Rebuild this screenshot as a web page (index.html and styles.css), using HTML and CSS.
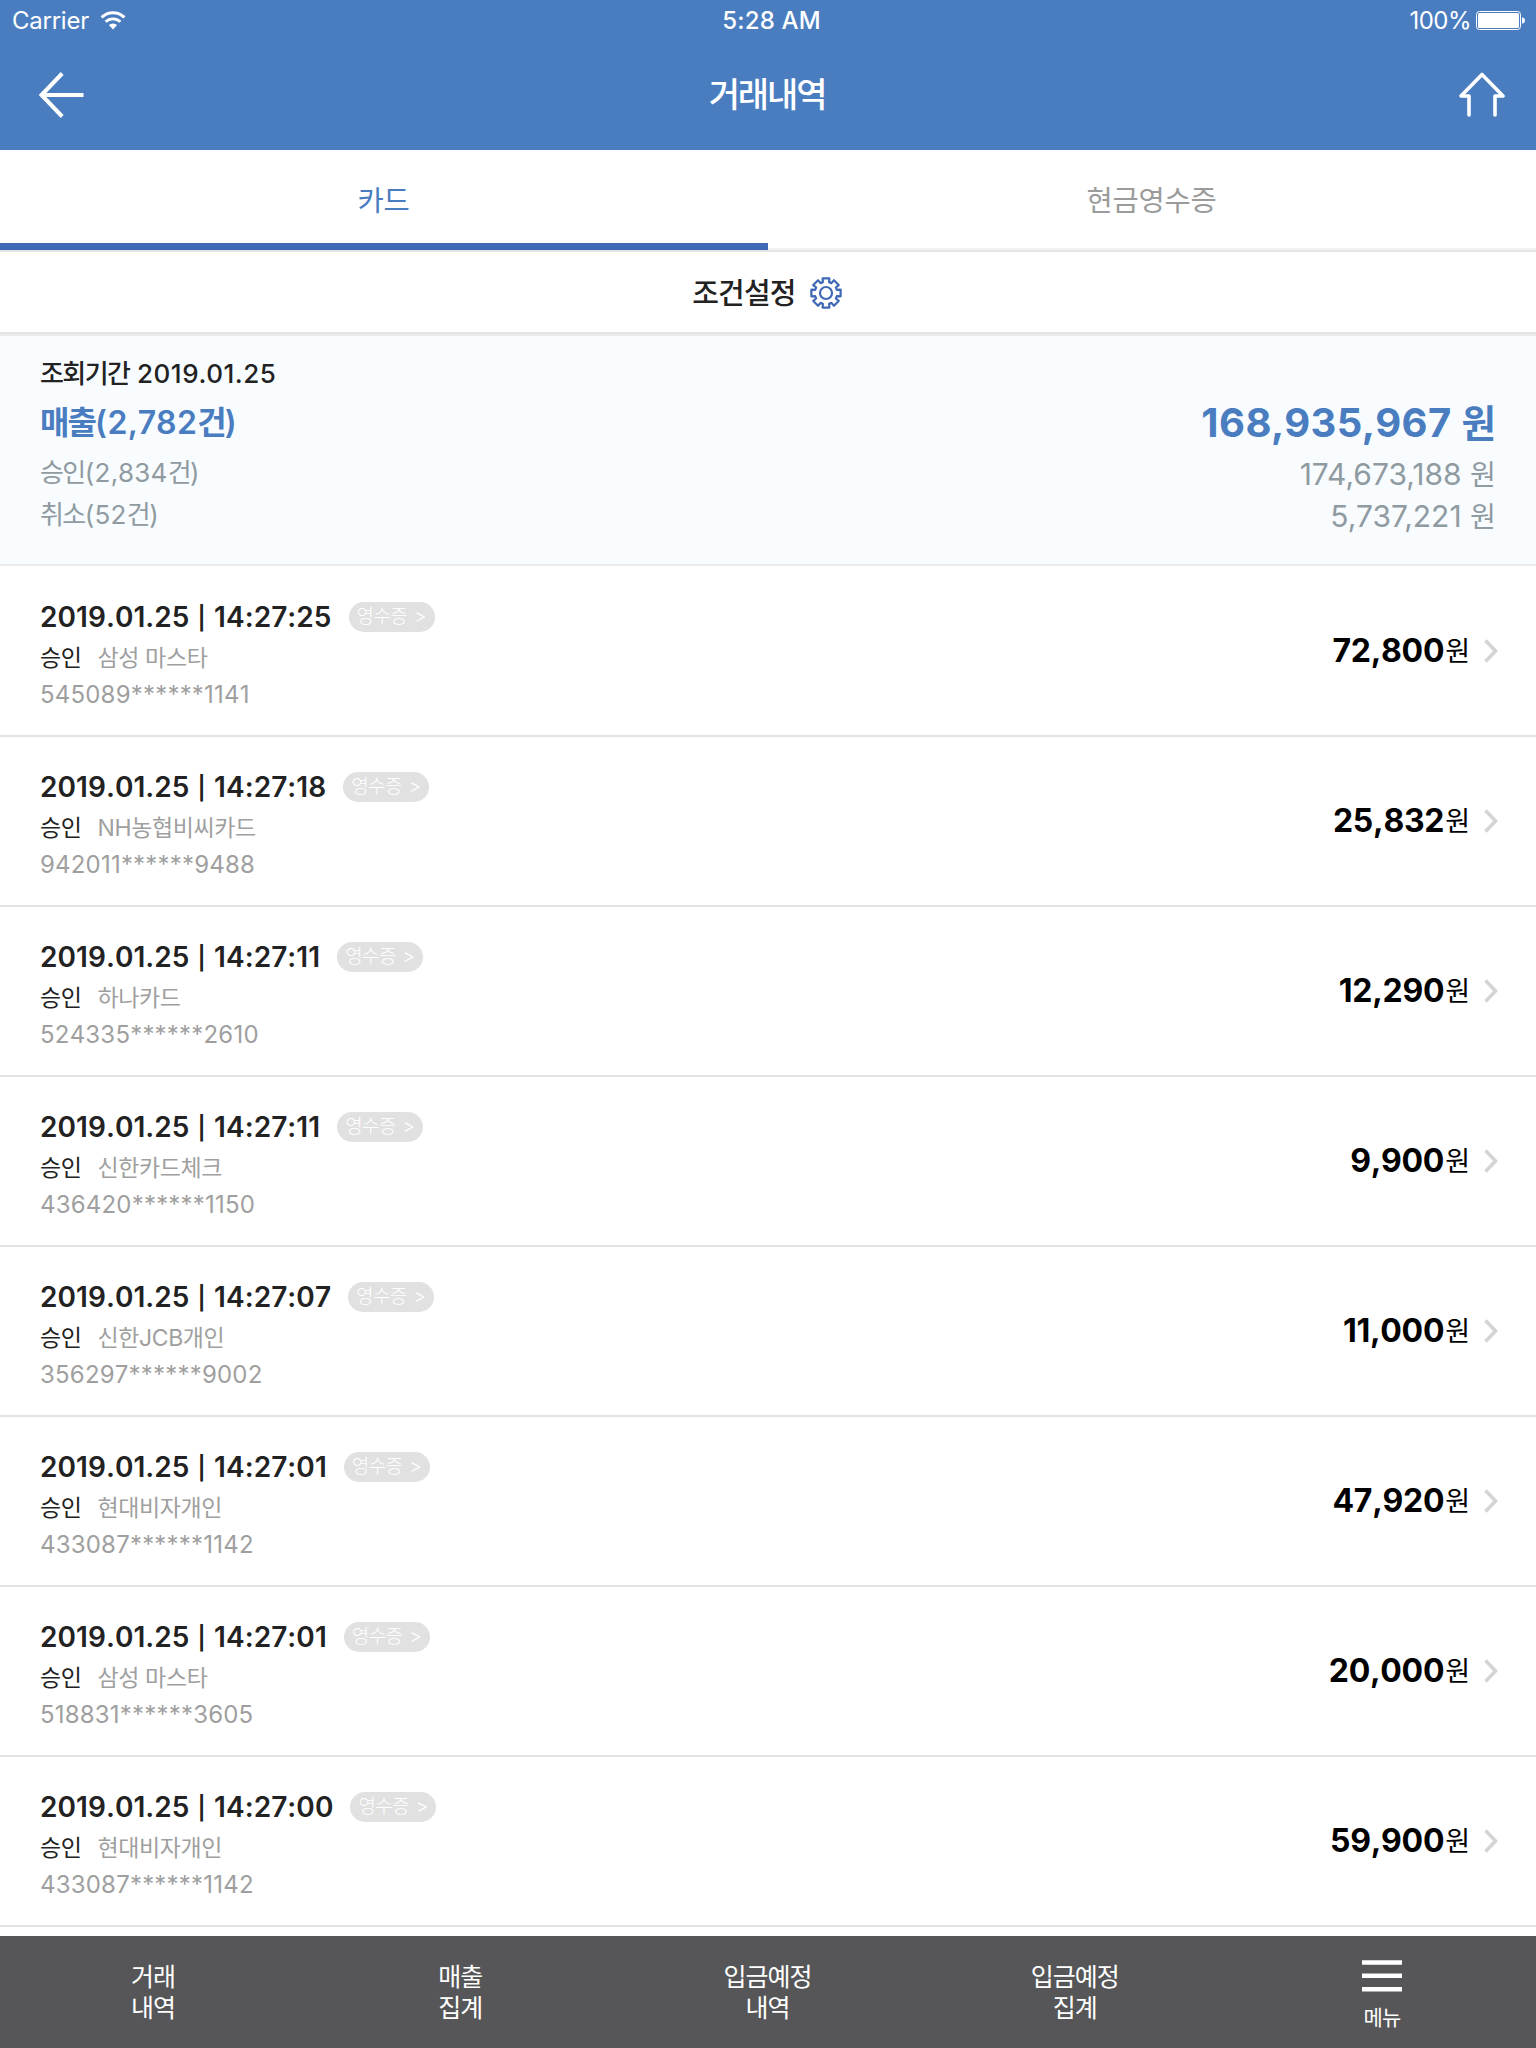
FILE: index.html
```html
<!DOCTYPE html>
<html lang="ko">
  <head>
    <meta charset="UTF-8" />
    <meta name="viewport" content="width=device-width, initial-scale=1.0" />
    <title>거래내역</title>
    <link rel="stylesheet" href="styles.css">
  </head>
  <body>
    <header>
      <div class="status">
        <div class="carrier">
          <span>Carrier</span>
          <svg width="26" height="19" viewBox="0 0 26 19">
            <path d="M1.600 6.400a16.200 16.200 0 0 1 22.800 0" fill="none" stroke="#fff" stroke-width="3"/>
            <path d="M5.600 10.800a10.600 10.600 0 0 1 14.800 0" fill="none" stroke="#fff" stroke-width="2.800"/>
            <path d="M13 18.400l-4.100-4.300a6 6 0 0 1 8.200 0z" fill="#fff"/>
          </svg>
        </div>
        <div class="clock">5:28 AM</div>
        <div class="battery">
          <span>100%</span>
          <svg width="49" height="19" viewBox="0 0 49 19">
            <rect x=".5" y=".5" width="44" height="18" rx="3" fill="none" stroke="#fff"/>
            <rect x="2" y="2" width="41" height="15" rx="1.500" fill="#fff"/>
            <path d="M46 6.200c4 .6 4 6 0 6.600z" fill="#fff"/>
          </svg>
        </div>
      </div>
      <div class="titlebar">
        <svg width="46" height="46" viewBox="0 0 46 46">
          <path d="M24.200 1.500L3.500 23l20.700 21.500M3.500 23h42" fill="none" stroke="#fff" stroke-width="4"/>
        </svg>
        <h1>거래내역</h1>
        <svg width="46" height="46" viewBox="0 0 46 46">
          <path d="M10 43V24H2L23 2.500 44 24h-8v19" fill="none" stroke="#fff" stroke-width="3.600" stroke-linecap="round" stroke-linejoin="round"/>
        </svg>
      </div>
    </header>

    <nav class="tabs">
      <button class="tab valgt">카드</button>
      <button class="tab">현금영수증</button>
    </nav>

    <div class="filter">
      <span class="filter-text">조건설정</span>
      <svg width="32" height="32" viewBox="-16 -16 32 32" fill="none" stroke="#3f69b5" stroke-width="2.200">
        <circle r="6"/>
        <path id="gear" stroke-linejoin="round"/>
      </svg>
    </div>

    <section class="summary">
      <div class="period"><span class="kr">조회기간</span> <span>2019.01.25</span></div>
      <div class="line total"><span><span class="kr">매출</span>(2,782<span class="kr">건</span>)</span><span class="sum">168,935,967 <span class="kr">원</span></span></div>
      <div class="line"><span><span class="kr">승인</span>(2,834<span class="kr">건</span>)</span><span class="sum">174,673,188 <span class="kr">원</span></span></div>
      <div class="line"><span><span class="kr">취소</span>(52<span class="kr">건</span>)</span><span class="sum">5,737,221 <span class="kr">원</span></span></div>
    </section>

    <main>
      <template>
        <article>
          <div class="info">
            <div class="top"><h2>2019.01.25 <i>|</i> <span class="tid"></span></h2><span class="badge">영수증 <i>&gt;</i></span></div>
            <div class="card"><span class="state">승인</span><span class="name"></span></div>
            <p></p>
          </div>
          <div class="amount"><strong></strong><span class="won">원</span></div>
          <svg class="arrow" width="14" height="24" viewBox="0 0 14 24">
            <path d="M1.500 1.500L11.500 12 1.500 22.500" fill="none" stroke="#d4d4d4" stroke-width="3.600"/>
          </svg>
        </article>
      </template>
    </main>

    <footer>
      <a>거래<br>내역</a>
      <a>매출<br>집계</a>
      <a>입금예정<br>내역</a>
      <a>입금예정<br>집계</a>
      <a class="menu">
        <svg width="40" height="32" viewBox="0 0 40 32">
          <path d="M0 2.500h40M0 15.700h40M0 29.300h40" stroke="#fff" stroke-width="4.600"/>
        </svg>
        <span>메뉴</span>
      </a>
    </footer>

    <script>
      const liste = [
        { tid: "14:27:25", kort: "삼성 마스타", nr: "545089******1141", pris: "72,800" },
        { tid: "14:27:18", kort: "NH농협비씨카드", nr: "942011******9488", pris: "25,832" },
        { tid: "14:27:11", kort: "하나카드", nr: "524335******2610", pris: "12,290" },
        { tid: "14:27:11", kort: "신한카드체크", nr: "436420******1150", pris: "9,900" },
        { tid: "14:27:07", kort: "신한JCB개인", nr: "356297******9002", pris: "11,000" },
        { tid: "14:27:01", kort: "현대비자개인", nr: "433087******1142", pris: "47,920" },
        { tid: "14:27:01", kort: "삼성 마스타", nr: "518831******3605", pris: "20,000" },
        { tid: "14:27:00", kort: "현대비자개인", nr: "433087******1142", pris: "59,900" },
      ];

      const container = document.querySelector("main");
      const temp = document.querySelector("template");

      liste.forEach((post) => {
        const klon = temp.cloneNode(true).content;
        klon.querySelector(".tid").textContent = post.tid;
        klon.querySelector(".name").textContent = post.kort;
        klon.querySelector("p").textContent = post.nr;
        klon.querySelector("strong").textContent = post.pris;
        container.appendChild(klon);
      });

      // gear outline with 8 teeth
      const punkter = [];
      for (let i = 0; i < 8; i++) {
        [[-16, 11.3], [-13, 15], [13, 15], [16, 11.3]].forEach(([v, r]) => {
          const a = ((i * 45 + v) * Math.PI) / 180;
          punkter.push((Math.sin(a) * r).toFixed(2) + " " + (-Math.cos(a) * r).toFixed(2));
        });
      }
      document.querySelector("#gear").setAttribute("d", "M" + punkter.join("L") + "Z");
    </script>
  </body>
</html>
```
FILE: styles.css
```css
* {
  box-sizing: border-box;
}

body {
  margin: 0;
  height: 2048px;
  overflow: hidden;
  display: flex;
  flex-direction: column;
  background-color: white;
  color: #222;
  font-family: Inter, "Noto Sans CJK KR", sans-serif;
}

h1, h2, p {
  margin: 0;
}

svg {
  display: block;
  flex: none;
}

header {
  height: 150px;
  background-color: #4a7dbf;
  color: white;
}

.status {
  display: grid;
  grid-template-columns: 1fr auto 1fr;
  align-items: center;
  height: 40px;
  padding: 1px 11px 0 12px;
  font-size: 24px;
}

.carrier,
.battery {
  display: flex;
  align-items: center;
  gap: 11px;
  letter-spacing: -0.25px;
}

.battery {
  justify-content: flex-end;
  gap: 5px;
  letter-spacing: -0.5px;
}

.clock {
  padding-left: 6px;
  font-weight: 500;
  letter-spacing: 0.15px;
}

.titlebar {
  display: flex;
  justify-content: space-between;
  align-items: center;
  height: 110px;
  padding: 0 31px 0 38px;
}

h1 {
  padding-right: 9px;
  font-size: 34px;
  font-weight: 500;
  line-height: 50px;
  letter-spacing: -2.1px;
}

.tabs {
  display: flex;
  height: 102px;
  border-bottom: 2px solid #e4e4e4;
}

.tab {
  flex: 1;
  border: none;
  border-bottom: 2px solid #f2f2f2;
  padding: 0 1px 2px 0;
  background: none;
  font-family: inherit;
  font-size: 28.500px;
  letter-spacing: -0.25px;
  color: #9b9b9b;
}

.tab.valgt {
  border-bottom: 7px solid #3f69b5;
  padding: 4px 1px 0 0;
  color: #4a7dbf;
}

.filter {
  display: flex;
  justify-content: center;
  align-items: center;
  gap: 14px;
  height: 84px;
  padding: 0 2px 1px 0;
  border-bottom: 2px solid #ebebeb;
  box-shadow: inset 0 -2px #e4e4e4;
}

.filter-text {
  padding-bottom: 4px;
  font-size: 29px;
  font-weight: 500;
  letter-spacing: -0.8px;
}

.summary {
  height: 230px;
  padding: 19px 40px 0;
  border-bottom: 2px solid #e9ebed;
  background-color: #f8fcff;
  color: #8f9aa1;
  font-size: 26px;
  letter-spacing: 0.3px;
}

.period {
  height: 38px;
  line-height: 38px;
  font-weight: 500;
  color: #222;
  letter-spacing: 0.55px;
}

.line {
  display: flex;
  justify-content: space-between;
  height: 42px;
  line-height: 42px;
}

.line .sum {
  padding-top: 1px;
  font-size: 30px;
  letter-spacing: 0;
}

.total {
  height: 59px;
  line-height: 59px;
  font-size: 32px;
  font-weight: 600;
  color: #4a7dbf;
  letter-spacing: 0.4px;
}

.total .sum {
  padding-top: 0;
  font-size: 40px;
  font-weight: 700;
  letter-spacing: 0.4px;
}

.kr {
  letter-spacing: -0.06em;
}

.sum .kr {
  font-size: 0.940em;
  letter-spacing: 0;
}

main {
  flex: 1;
  min-height: 0;
  padding-top: 1px;
}

article {
  display: flex;
  align-items: center;
  height: 170px;
  padding: 0 38px 0 40px;
  border-bottom: 2px solid #e4e4e4;
}

.info {
  flex: 1;
  padding-top: 8px;
}

.top {
  display: flex;
  align-items: center;
  gap: 17px;
  height: 40px;
}

h2 {
  font-size: 28px;
  font-weight: 600;
  font-kerning: none;
  letter-spacing: 0.06px;
}

h2 i {
  position: relative;
  top: -1px;
  margin: 0 1px;
  font-size: 23px;
  font-style: normal;
}

.badge {
  width: 86px;
  height: 30px;
  border-radius: 15px;
  padding-left: 8px;
  background-color: #e1e1e1;
  color: white;
  font-size: 19px;
  font-weight: 300;
  line-height: 30px;
  letter-spacing: -0.6px;
}

.badge i {
  margin-left: 2px;
  font-style: normal;
}

.card {
  display: flex;
  gap: 16px;
  height: 39px;
  padding-top: 2px;
  line-height: 38px;
  font-size: 23px;
  letter-spacing: -0.4px;
}

.name,
p {
  color: #9f9f9f;
}

p {
  font-size: 24px;
  line-height: 38px;
  font-kerning: none;
  letter-spacing: 0.2px;
}

.amount {
  padding-top: 5px;
  color: black;
  line-height: 36px;
}

strong {
  margin-right: 1px;
  font-size: 32px;
  font-kerning: none;
  letter-spacing: -0.3px;
}

.won {
  position: relative;
  top: -1px;
  font-size: 27px;
}

.arrow {
  margin-left: 14px;
}

footer {
  display: flex;
  height: 112px;
  background-color: #565658;
  color: white;
  font-size: 25px;
  line-height: 31px;
  letter-spacing: -1px;
  text-align: center;
}

footer a {
  flex: 1;
  padding: 26px 1px 0 0;
}

footer .menu {
  display: flex;
  flex-direction: column;
  align-items: center;
  gap: 10px;
  padding-top: 24px;
  font-size: 21px;
}
```
